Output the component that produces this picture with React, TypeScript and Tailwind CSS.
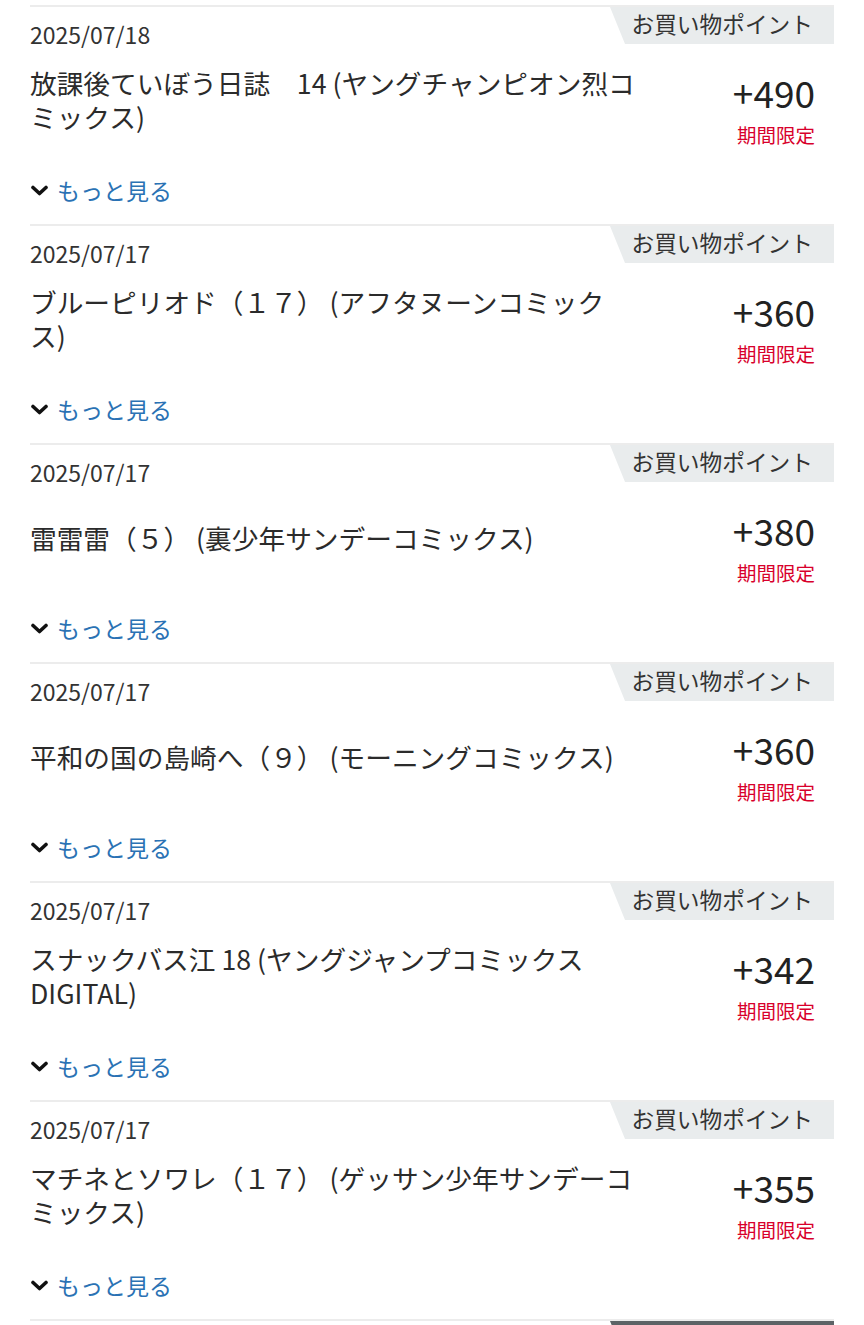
import { useState } from 'react';

type Entry = {
  date: string;
  title: string;
  points: number;
  badge: string;
  dark?: boolean;
};

const entries: Entry[] = [
  { date: '2025/07/18', title: '放課後ていぼう日誌　14 (ヤングチャンピオン烈コミックス)', points: 490, badge: 'お買い物ポイント' },
  { date: '2025/07/17', title: 'ブルーピリオド（１７） (アフタヌーンコミックス)', points: 360, badge: 'お買い物ポイント' },
  { date: '2025/07/17', title: '雷雷雷（５） (裏少年サンデーコミックス)', points: 380, badge: 'お買い物ポイント' },
  { date: '2025/07/17', title: '平和の国の島崎へ（９） (モーニングコミックス)', points: 360, badge: 'お買い物ポイント' },
  { date: '2025/07/17', title: 'スナックバス江 18 (ヤングジャンプコミックス DIGITAL)', points: 342, badge: 'お買い物ポイント' },
  { date: '2025/07/17', title: 'マチネとソワレ（１７） (ゲッサン少年サンデーコミックス)', points: 355, badge: 'お買い物ポイント' },
  { date: '2025/07/16', title: 'キャンペーン付与', points: 100, badge: 'キャンペーン', dark: true },
];

function Chevron() {
  return (
    <svg width="17" height="11" viewBox="0 0 17 11" className="shrink-0">
      <polyline points="2,2.5 8.5,8.5 15,2.5" fill="none" stroke="#111" strokeWidth="3.6" strokeLinecap="round" strokeLinejoin="round" />
    </svg>
  );
}

function PointRow({ entry }: { entry: Entry }) {
  const [open, setOpen] = useState(false);
  return (
    <div className="h-[219px] border-t-2 border-[#ececec] flex flex-col">
      <div className="flex justify-between items-start h-[44px]">
        <div className="pt-[12px] text-[23px] leading-[30px] text-[#333]">{entry.date}</div>
        <div
          className={
            'w-[224px] h-[37px] flex justify-end pr-[21px] text-[22.7px] leading-[33px] [clip-path:polygon(0_0,100%_0,100%_100%,15px_100%)] ' +
            (entry.dark ? 'bg-[#5c6366] text-white' : 'bg-[#e9eced] text-[#333]')
          }
        >
          {entry.badge}
        </div>
      </div>
      <div className="flex items-start">
        <div className="w-[607px] h-[97px] flex items-center">
          <p className="text-[26.7px] leading-[34px] text-[#2b2b2b]">{entry.title}</p>
        </div>
        <div className="flex-1 flex flex-col items-end pr-[19px] pt-[21px]">
          <div className="text-[37px] leading-[40px] text-[#222]">+{entry.points}</div>
          <div className="mt-[11px] text-[19.5px] leading-[24px] text-[#d8002c]">期間限定</div>
        </div>
      </div>
      <button
        onClick={() => setOpen(!open)}
        className="mt-[27px] flex items-center gap-[9px] pl-[1px] text-[23px] leading-[30px] text-[#2a72b4] self-start"
      >
        <Chevron />
        <span>もっと見る</span>
      </button>
    </div>
  );
}

export default function App() {
  return (
    <div className="min-h-screen bg-white px-[30px] pt-[5px] font-['Noto_Sans_CJK_JP','Noto_Sans',sans-serif]">
      {entries.map((e, i) => (
        <PointRow key={i} entry={e} />
      ))}
    </div>
  );
}
